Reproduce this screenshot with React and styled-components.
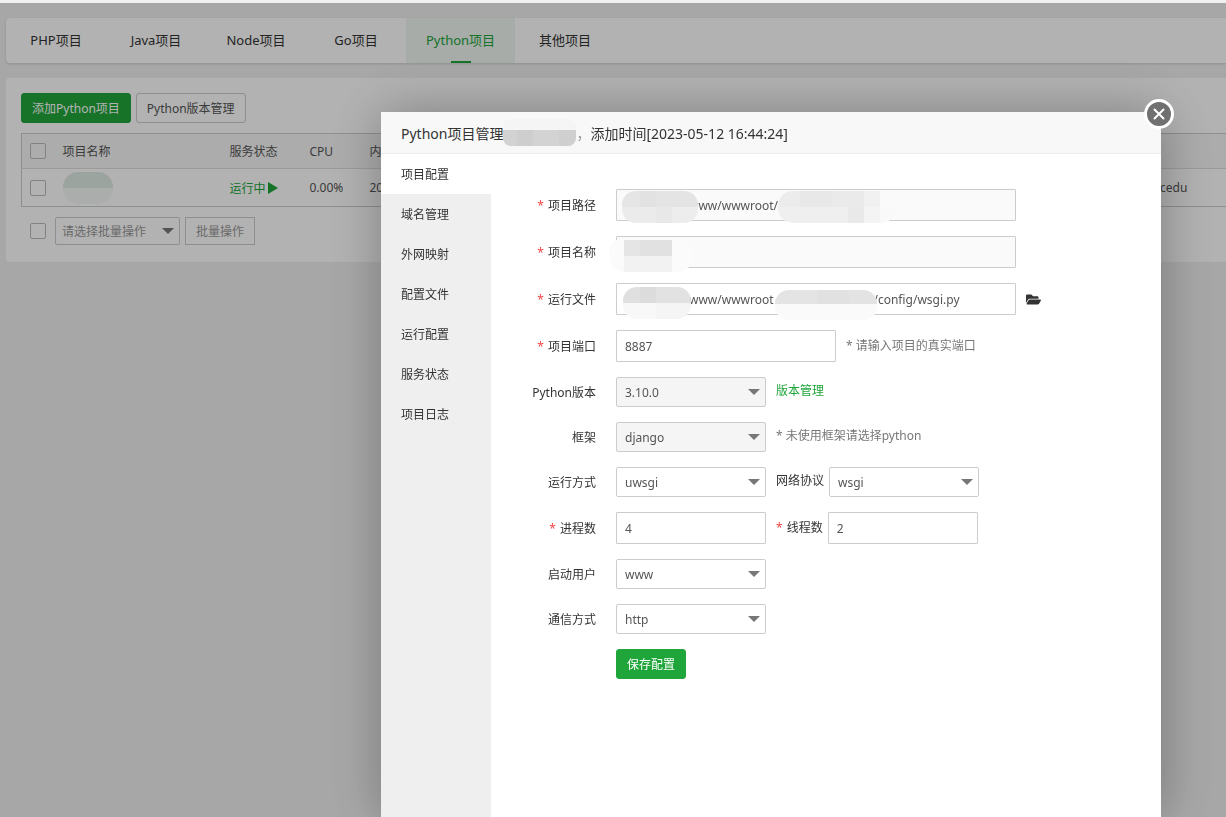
import React, { useState } from "react";
import styled, { createGlobalStyle } from "styled-components";
import { FaFolderOpen } from "react-icons/fa";

const tabs = ["PHP项目", "Java项目", "Node项目", "Go项目", "Python项目", "其他项目"];

const menus = [
  "项目配置",
  "域名管理",
  "外网映射",
  "配置文件",
  "运行配置",
  "服务状态",
  "项目日志",
];

// masked values, cells are [x, y, width, height, color]
const masks = {
  title: {
    width: 73,
    height: 27,
    radius: 8,
    cells: [
      [0, 0, 73, 11, "#f5f5f5"],
      [0, 11, 14, 16, "#d2d2d2"],
      [14, 11, 16, 16, "#cecece"],
      [30, 11, 26, 16, "#d3d3d3"],
      [56, 11, 17, 16, "#cfcfcf"],
    ],
  },
  row: {
    width: 50,
    height: 32,
    radius: 15,
    cells: [
      [0, 0, 50, 16, "#e0ebe4"],
      [0, 16, 50, 16, "#f5f8f6"],
    ],
  },
  pathStart: {
    width: 76,
    height: 32,
    radius: 14,
    cells: [
      [0, 0, 18, 16, "#e5e5e5"],
      [18, 0, 16, 16, "#e2e2e2"],
      [34, 0, 42, 16, "#e4e4e4"],
      [0, 16, 34, 16, "#ebebeb"],
      [34, 16, 16, 16, "#e8e8e8"],
      [50, 16, 26, 16, "#ededed"],
    ],
  },
  pathEnd: {
    width: 118,
    height: 32,
    radius: 15,
    cells: [
      [0, 0, 22, 16, "#ececec"],
      [22, 0, 32, 16, "#e8e8e8"],
      [54, 0, 32, 16, "#eaeaea"],
      [86, 0, 16, 16, "#f1f1f1"],
      [0, 16, 70, 16, "#efefef"],
      [70, 16, 16, 16, "#e9e9e9"],
      [86, 16, 16, 16, "#f4f4f4"],
      [102, 16, 16, 16, "#f9f9f9"],
    ],
  },
  name: {
    width: 84,
    height: 34,
    radius: 15,
    cells: [
      [0, 0, 84, 34, "#fbfbfb"],
      [15, 2, 16, 16, "#e5e5e5"],
      [31, 2, 32, 16, "#e1e1e1"],
      [15, 18, 48, 16, "#f2f2f2"],
    ],
  },
  fileStart: {
    width: 68,
    height: 32,
    radius: 14,
    cells: [
      [0, 0, 17, 16, "#e0e0e0"],
      [17, 0, 16, 16, "#dcdcdc"],
      [33, 0, 35, 16, "#e2e2e2"],
      [0, 16, 33, 16, "#f8f8f8"],
      [33, 16, 35, 16, "#f5f5f5"],
    ],
  },
  fileEnd: {
    width: 102,
    height: 30,
    radius: 14,
    cells: [
      [0, 0, 42, 14, "#e4e4e4"],
      [42, 0, 32, 14, "#e1e1e1"],
      [74, 0, 28, 14, "#e3e3e3"],
      [0, 14, 102, 16, "#fafafa"],
    ],
  },
};

function Mask({ name }) {
  const { width, height, radius, cells } = masks[name];
  return (
    <svg width={width} height={height} aria-hidden="true">
      <clipPath id={`mask-${name}`}>
        <rect width={width} height={height} rx={radius} />
      </clipPath>
      <g clipPath={`url(#mask-${name})`}>
        {cells.map(([x, y, w, h, fill]) => (
          <rect key={`${x}-${y}-${w}`} x={x} y={y} width={w} height={h} fill={fill} />
        ))}
      </g>
    </svg>
  );
}

function Select({ id, value, width = 150, disabled, muted, label }) {
  return (
    <SelectBox $width={width} $muted={muted}>
      <select id={id} disabled={disabled} defaultValue={value} aria-label={label}>
        <option>{value}</option>
      </select>
    </SelectBox>
  );
}

function Label({ id, required, children }) {
  return (
    <FieldLabel htmlFor={id}>
      {required && <Star>*</Star>}
      {children}
    </FieldLabel>
  );
}

export default function App() {
  const [menu, setMenu] = useState(0);

  return (
    <>
      <GlobalStyle />
      <Page>
        <TabBar>
          {tabs.map((tab) => (
            <Tab key={tab} href="#" $active={tab === "Python项目"}>
              {tab}
            </Tab>
          ))}
        </TabBar>
        <Card>
          <Toolbar>
            <Button $primary>添加Python项目</Button>
            <Button>Python版本管理</Button>
          </Toolbar>
          <Table>
            <colgroup>
              <col width="33" />
              <col width="167" />
              <col width="80" />
              <col width="60" />
              <col />
              <col width="74" />
            </colgroup>
            <thead>
              <tr>
                <th>
                  <Checkbox type="checkbox" aria-label="全选" />
                </th>
                <th>项目名称</th>
                <th>服务状态</th>
                <th>CPU</th>
                <th>内存</th>
                <th />
              </tr>
            </thead>
            <tbody>
              <tr>
                <td>
                  <Checkbox type="checkbox" aria-label="选择项目" />
                </td>
                <td>
                  <Mask name="row" />
                </td>
                <td>
                  <Running href="#">
                    运行中
                    <svg width="10" height="12" viewBox="0 0 10 12">
                      <path d="M0 0L10 6L0 12Z" fill="currentColor" />
                    </svg>
                  </Running>
                </td>
                <td>0.00%</td>
                <td>20</td>
                <td>cedu</td>
              </tr>
            </tbody>
          </Table>
          <Batch>
            <Checkbox type="checkbox" aria-label="全选" />
            <Select value="请选择批量操作" width={125} muted label="批量操作" />
            <BatchButton disabled>批量操作</BatchButton>
          </Batch>
        </Card>
      </Page>

      <Overlay>
        <Modal role="dialog" aria-labelledby="title">
          <CloseButton aria-label="关闭">
            <svg width="12" height="12" viewBox="0 0 12 12">
              <path
                d="M1.5 1.5L10.5 10.5M10.5 1.5L1.5 10.5"
                stroke="#fff"
                strokeWidth="2"
                strokeLinecap="round"
              />
            </svg>
          </CloseButton>
          <ModalHeader id="title">
            Python项目管理
            <Mask name="title" />
            <Comma>，</Comma>
            添加时间[2023-05-12 16:44:24]
          </ModalHeader>
          <ModalBody>
            <Menu>
              {menus.map((item, i) => (
                <MenuItem key={item} $active={i === menu} onClick={() => setMenu(i)}>
                  {item}
                </MenuItem>
              ))}
            </Menu>
            <Form onSubmit={(e) => e.preventDefault()}>
              <Row>
                <Label id="path" required>
                  项目路径
                </Label>
                <Field>
                  <Input id="path" $width={400} $indent={72} readOnly value="www/wwwroot/" />
                  <Cover $left={6} $top={2}>
                    <Mask name="pathStart" />
                  </Cover>
                  <Cover $left={162} $top={2}>
                    <Mask name="pathEnd" />
                  </Cover>
                </Field>
              </Row>
              <Row>
                <Label id="name" required>
                  项目名称
                </Label>
                <Field>
                  <Input id="name" $width={400} readOnly value="" />
                  <Cover $left={-7} $top={2}>
                    <Mask name="name" />
                  </Cover>
                </Field>
              </Row>
              <Row>
                <Label id="file" required>
                  运行文件
                </Label>
                <Field>
                  <Input
                    id="file"
                    $width={400}
                    $indent={72}
                    defaultValue={`www/wwwroot${" ".repeat(32)}/config/wsgi.py`}
                  />
                  <Cover $left={7} $top={4}>
                    <Mask name="fileStart" />
                  </Cover>
                  <Cover $left={159} $top={7}>
                    <Mask name="fileEnd" />
                  </Cover>
                </Field>
                <IconButton type="button" aria-label="选择文件">
                  <FaFolderOpen />
                </IconButton>
              </Row>
              <Row>
                <Label id="port" required>
                  项目端口
                </Label>
                <Input id="port" $width={220} defaultValue="8887" />
                <Aside $color="#777">* 请输入项目的真实端口</Aside>
              </Row>
              <Row $select>
                <Label id="version">Python版本</Label>
                <Select id="version" value="3.10.0" disabled />
                <Aside as="a" href="#" $color="#20a53a">
                  版本管理
                </Aside>
              </Row>
              <Row $select>
                <Label id="framework">框架</Label>
                <Select id="framework" value="django" disabled />
                <Aside $color="#777">* 未使用框架请选择python</Aside>
              </Row>
              <Row $select>
                <Label id="mode">运行方式</Label>
                <Select id="mode" value="uwsgi" />
                <SideLabel htmlFor="protocol">网络协议</SideLabel>
                <Select id="protocol" value="wsgi" />
              </Row>
              <Row>
                <Label id="process" required>
                  进程数
                </Label>
                <Input id="process" $width={150} defaultValue="4" />
                <SideLabel htmlFor="thread">
                  <Star>*</Star>线程数
                </SideLabel>
                <Input id="thread" $width={150} defaultValue="2" />
              </Row>
              <Row $select>
                <Label id="user">启动用户</Label>
                <Select id="user" value="www" />
              </Row>
              <Row $select>
                <Label id="comm">通信方式</Label>
                <Select id="comm" value="http" />
              </Row>
              <Actions>
                <Button $primary>保存配置</Button>
              </Actions>
            </Form>
          </ModalBody>
        </Modal>
      </Overlay>
    </>
  );
}

const GlobalStyle = createGlobalStyle`
  * {
    box-sizing: border-box;
  }
  body {
    margin: 0;
    background: #f0f0f0;
    overflow: hidden;
  }
  body, button, input, select {
    font-family: "Noto Sans", "Noto Sans CJK SC", sans-serif;
    font-size: 12px;
    color: #333;
  }
  a {
    text-decoration: none;
  }
  svg {
    display: block;
    flex: none;
  }
`;

const Page = styled.div`
  padding: 18px 0 0 6px;
`;

const TabBar = styled.nav`
  display: flex;
  height: 45px;
  background: #fff;
  border-radius: 4px 0 0 4px;
  box-shadow: 0 1px 3px rgba(0, 0, 0, 0.15);
`;

const Tab = styled.a`
  display: flex;
  flex-direction: column;
  align-items: center;
  min-width: 100px;
  padding: 0 20px;
  line-height: 45px;
  font-size: 13px;
  color: ${(p) => (p.$active ? "#20a53a" : "#333")};
  background: ${(p) => (p.$active ? "#eff6f1" : "transparent")};
  &::after {
    content: "";
    width: 20px;
    height: 2px;
    margin-top: -2px;
    background: ${(p) => (p.$active ? "#20a53a" : "transparent")};
  }
`;

const Card = styled.section`
  margin-top: 15px;
  padding: 15px 0 17px 15px;
  background: #fff;
  border-radius: 4px 0 0 4px;
`;

const Toolbar = styled.div`
  display: flex;
  gap: 5px;
  margin-bottom: 10px;
`;

const Button = styled.button`
  height: 30px;
  padding: 0 10px;
  border: 1px solid ${(p) => (p.$primary ? "#20a53a" : "#ccc")};
  border-radius: 3px;
  background: ${(p) => (p.$primary ? "#20a53a" : "#fff")};
  color: ${(p) => (p.$primary ? "#fff" : "#555")};
  cursor: pointer;
`;

const Checkbox = styled.input`
  appearance: none;
  display: block;
  width: 16px;
  height: 16px;
  margin: 0;
  border: 1px solid #bbb;
  border-radius: 2px;
`;

const Table = styled.table`
  width: 100%;
  table-layout: fixed;
  border-collapse: collapse;
  border: 1px solid #ccc;
  border-right: none;
  th,
  td {
    height: 38px;
    padding: 0 8px;
    text-align: left;
    font-weight: normal;
    color: #555;
    white-space: nowrap;
  }
  th {
    height: 35px;
    background: #f6f6f6;
    border-bottom: 1px solid #ddd;
  }
`;

const Running = styled.a`
  display: flex;
  align-items: center;
  gap: 2px;
  color: #20a53a;
`;

const Batch = styled.div`
  display: flex;
  align-items: center;
  gap: 5px;
  margin-top: 10px;
  padding-left: 9px;
  ${Checkbox} {
    margin-right: 4px;
  }
`;

const BatchButton = styled.button`
  height: 28px;
  padding: 0 10px;
  border: 1px solid #ccc;
  background: #fff;
  color: #999;
`;

const SelectBox = styled.div`
  position: relative;
  width: ${(p) => p.$width}px;
  height: ${(p) => (p.$muted ? 28 : 30)}px;
  select {
    appearance: none;
    display: block;
    width: 100%;
    height: 100%;
    padding: 0 ${(p) => (p.$muted ? 6 : 8)}px;
    border: 1px solid #ccc;
    border-radius: 2px;
    background: #fff;
    color: ${(p) => (p.$muted ? "#999" : "#555")};
    opacity: 1;
  }
  select:disabled {
    background: #f5f5f5;
  }
  &::after {
    content: "";
    position: absolute;
    right: 6px;
    top: 50%;
    margin-top: -3px;
    border: 6px solid transparent;
    border-top-color: #777;
    border-bottom: none;
    pointer-events: none;
  }
`;

const Overlay = styled.div`
  position: fixed;
  inset: 3px 0 0;
  display: flex;
  justify-content: flex-end;
  padding: 109px 65px 0 20px;
  background: rgba(0, 0, 0, 0.3);
`;

const Modal = styled.div`
  position: relative;
  display: flex;
  flex-direction: column;
  width: 100%;
  max-width: 780px;
  background: #fff;
  box-shadow: 1px 1px 50px rgba(0, 0, 0, 0.3);
`;

const CloseButton = styled.button`
  position: absolute;
  top: -13px;
  right: -13px;
  display: flex;
  align-items: center;
  justify-content: center;
  width: 30px;
  height: 30px;
  padding: 0;
  border: 3px solid #fff;
  border-radius: 50%;
  background: #707070;
  cursor: pointer;
`;

const ModalHeader = styled.header`
  display: flex;
  align-items: center;
  height: 42px;
  padding: 0 20px;
  border-bottom: 1px solid #eee;
  background: #f8f8f8;
  font-size: 14px;
  white-space: nowrap;
`;

const Comma = styled.span`
  color: #999;
`;

const ModalBody = styled.div`
  display: flex;
  flex: 1;
`;

const Menu = styled.nav`
  width: 110px;
  background: #efefef;
`;

const MenuItem = styled.button`
  display: block;
  width: 100%;
  height: 40px;
  padding: 0 20px;
  border: none;
  text-align: left;
  background: ${(p) => (p.$active ? "#fff" : "transparent")};
  cursor: pointer;
`;

const Form = styled.form`
  display: flex;
  flex: 1;
  flex-direction: column;
  gap: 15px;
  padding-top: 35px;
`;

const Aside = styled.span`
  align-self: flex-start;
  margin-left: 10px;
  color: ${(p) => p.$color};
`;

const SideLabel = styled.label`
  align-self: flex-start;
  margin: 0 5px 0 10px;
`;

const Row = styled.div`
  display: flex;
  align-items: center;
  ${Aside}, ${SideLabel} {
    line-height: ${(p) => (p.$select ? 28 : 32)}px;
  }
`;

const FieldLabel = styled.label`
  width: 105px;
  margin-right: 20px;
  text-align: right;
`;

const Star = styled.span`
  margin-right: 4px;
  color: #f04848;
`;

const Field = styled.div`
  position: relative;
`;

const Input = styled.input`
  display: block;
  width: ${(p) => p.$width}px;
  height: 32px;
  padding: 0 8px 0 ${(p) => p.$indent || 8}px;
  border: 1px solid #ccc;
  border-radius: 1px;
  background: #fff;
  color: #555;
  &:read-only {
    background: #fafafa;
  }
`;

const Cover = styled.div`
  position: absolute;
  left: ${(p) => p.$left}px;
  top: ${(p) => p.$top}px;
`;

const IconButton = styled.button`
  margin-left: 10px;
  padding: 0;
  border: none;
  background: none;
  font-size: 15px;
  cursor: pointer;
`;

const Actions = styled.div`
  padding-left: 125px;
`;
